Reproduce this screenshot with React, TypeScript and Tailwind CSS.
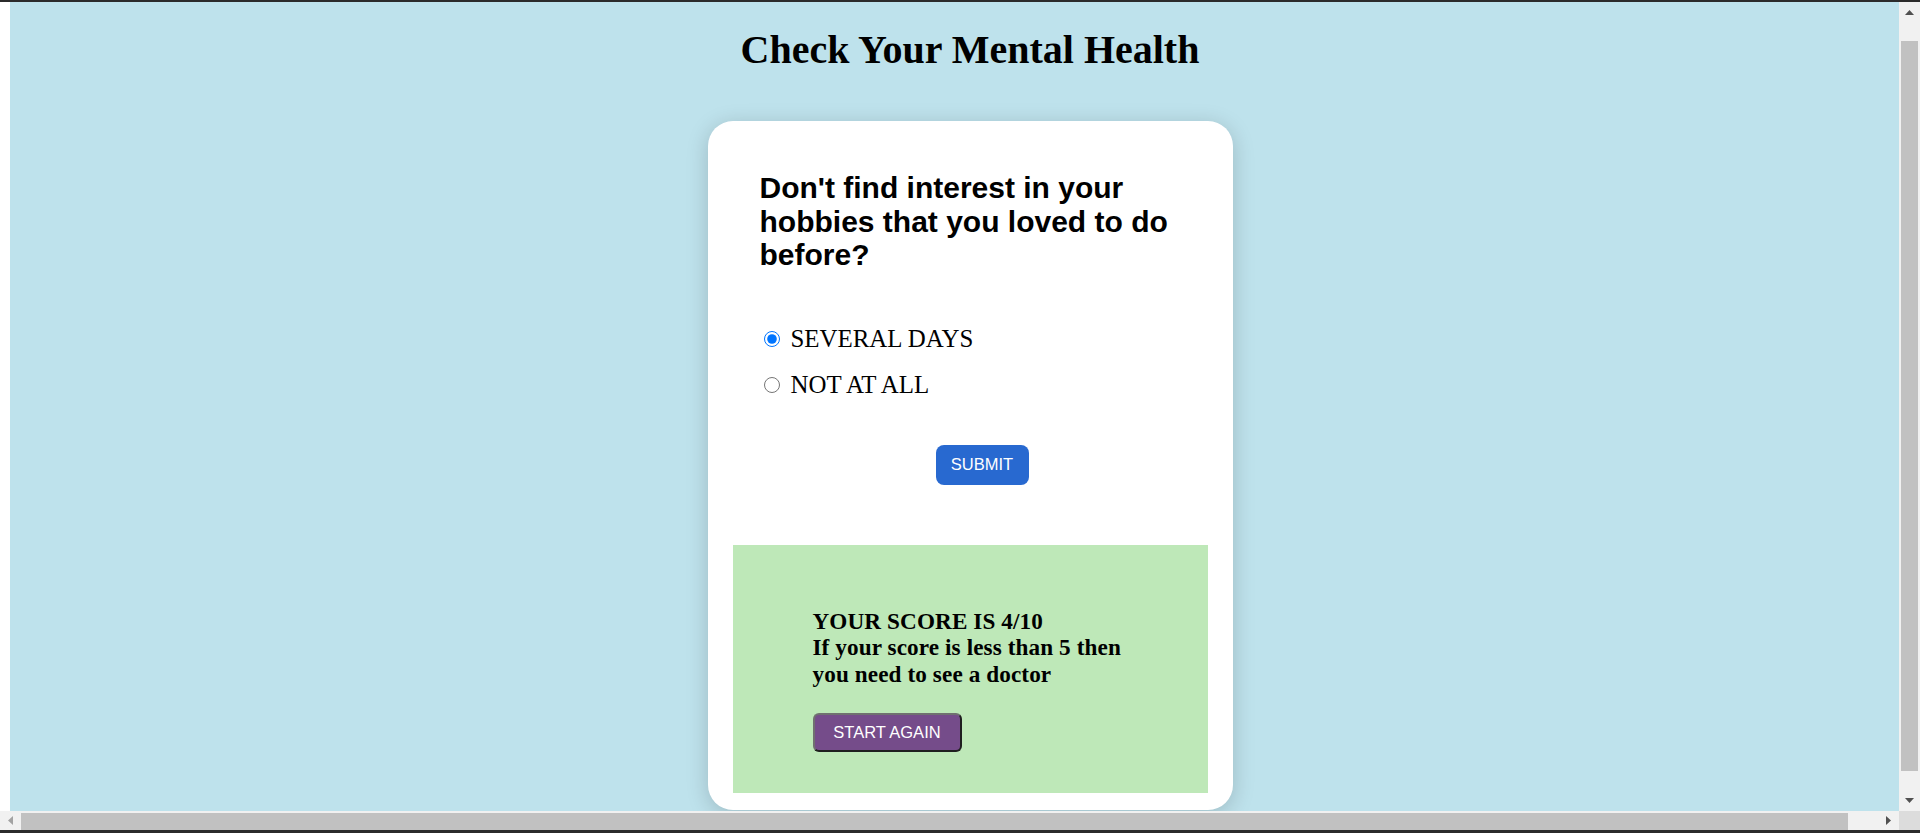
import React from "react"

const serif = { fontFamily: '"Liberation Serif", "Times New Roman", serif' }
const sans = { fontFamily: '"Liberation Sans", Arial, sans-serif' }

const options = [
  { id: "several", label: "SEVERAL DAYS", checked: true },
  { id: "none", label: "NOT AT ALL", checked: false },
]

function Arrow({ dir, color }: { dir: "up" | "down" | "left" | "right"; color: string }) {
  const paths = {
    up: "M0 5 L4.5 0 L9 5 Z",
    down: "M0 0 L9 0 L4.5 5 Z",
    left: "M5 0 L5 9 L0 4.5 Z",
    right: "M0 0 L5 4.5 L0 9 Z",
  }
  const vertical = dir === "up" || dir === "down"
  return (
    <svg width={vertical ? 9 : 5} height={vertical ? 5 : 9} viewBox={vertical ? "0 0 9 5" : "0 0 5 9"}>
      <path d={paths[dir]} fill={color} />
    </svg>
  )
}

function Quiz() {
  return (
    <div className="w-[525px] rounded-[25px] bg-white px-[25px] pb-[17px] shadow-[0_4px_22px_rgba(0,0,0,0.18)]">
      <div className="px-[27px] pt-[50px]">
        <h2 className="text-[30px] font-bold leading-[33.5px] text-black" style={sans}>
          Don't find interest in your hobbies that you loved to do before?
        </h2>

        <div className="mt-[44px] flex flex-col">
          {options.map((o) => (
            <label key={o.id} className="flex h-[46px] items-center">
              <input
                type="radio"
                name="answer"
                defaultChecked={o.checked}
                className="ml-[4px] h-4 w-4 accent-[#0075ff]"
              />
              <span className="ml-[11px] text-[24.9px] leading-[28px] text-black" style={serif}>
                {o.label}
              </span>
            </label>
          ))}
        </div>

        <div className="mt-[37px] flex justify-center pl-6">
          <button
            className="h-[40px] w-[93px] rounded-[8px] bg-[#2869d0] text-[16.5px] text-white"
            style={sans}
          >
            SUBMIT
          </button>
        </div>
      </div>

      <div className="mt-[60px] h-[248px] bg-[#bee8b8] px-[80px] pt-[63px]">
        <h3 className="text-[23.2px] font-bold leading-[26.5px] tracking-[0.1px] text-black" style={serif}>
          YOUR SCORE IS 4/10
          <br />
          If your score is less than 5 then you need to see a doctor
        </h3>
        <button
          className="mt-[26px] h-[39px] w-[149px] rounded-[6px] border-2 border-t-[#707070] border-l-[#707070] border-r-[#1f1f1f] border-b-[#1f1f1f] bg-[#754c8a] text-[16.5px] text-white"
          style={sans}
        >
          START AGAIN
        </button>
      </div>
    </div>
  )
}

export default function App() {
  return (
    <div className="flex h-[833px] w-[1920px] flex-col overflow-hidden bg-[#2b2b2b]">
      <div className="h-[2px] bg-[#2b2b2b]" />
      <div className="flex h-[809px]">
        <div className="w-[10px] bg-white" />
        <main className="flex flex-1 flex-col items-center overflow-hidden bg-[#bee2ec] pl-[31px]">
          <h1 className="mt-[25px] text-[40px] font-bold leading-[46px] text-black" style={serif}>
            Check Your Mental Health
          </h1>
          <div className="mt-[48px]">
            <Quiz />
          </div>
        </main>
        <div className="flex w-[21px] flex-col bg-[#f1f1f1]">
          <div className="flex h-[21px] items-center justify-center">
            <Arrow dir="up" color="#505050" />
          </div>
          <div className="mx-[2px] mt-[18px] h-[730px] bg-[#c1c1c1]" />
          <div className="flex-1" />
          <div className="flex h-[21px] items-center justify-center">
            <Arrow dir="down" color="#505050" />
          </div>
        </div>
      </div>
      <div className="flex h-[19px] bg-[#f1f1f1]">
        <div className="flex w-[21px] items-center justify-center">
          <Arrow dir="left" color="#a3a3a3" />
        </div>
        <div className="pt-[2px]">
          <div className="h-[17px] w-[1827px] bg-[#c1c1c1]" />
        </div>
        <div className="flex-1" />
        <div className="flex w-[21px] items-center justify-center">
          <Arrow dir="right" color="#505050" />
        </div>
        <div className="w-[21px] bg-[#dcdcdc]" />
      </div>
      <div className="h-[3px] bg-[#2b2b2b]" />
    </div>
  )
}
